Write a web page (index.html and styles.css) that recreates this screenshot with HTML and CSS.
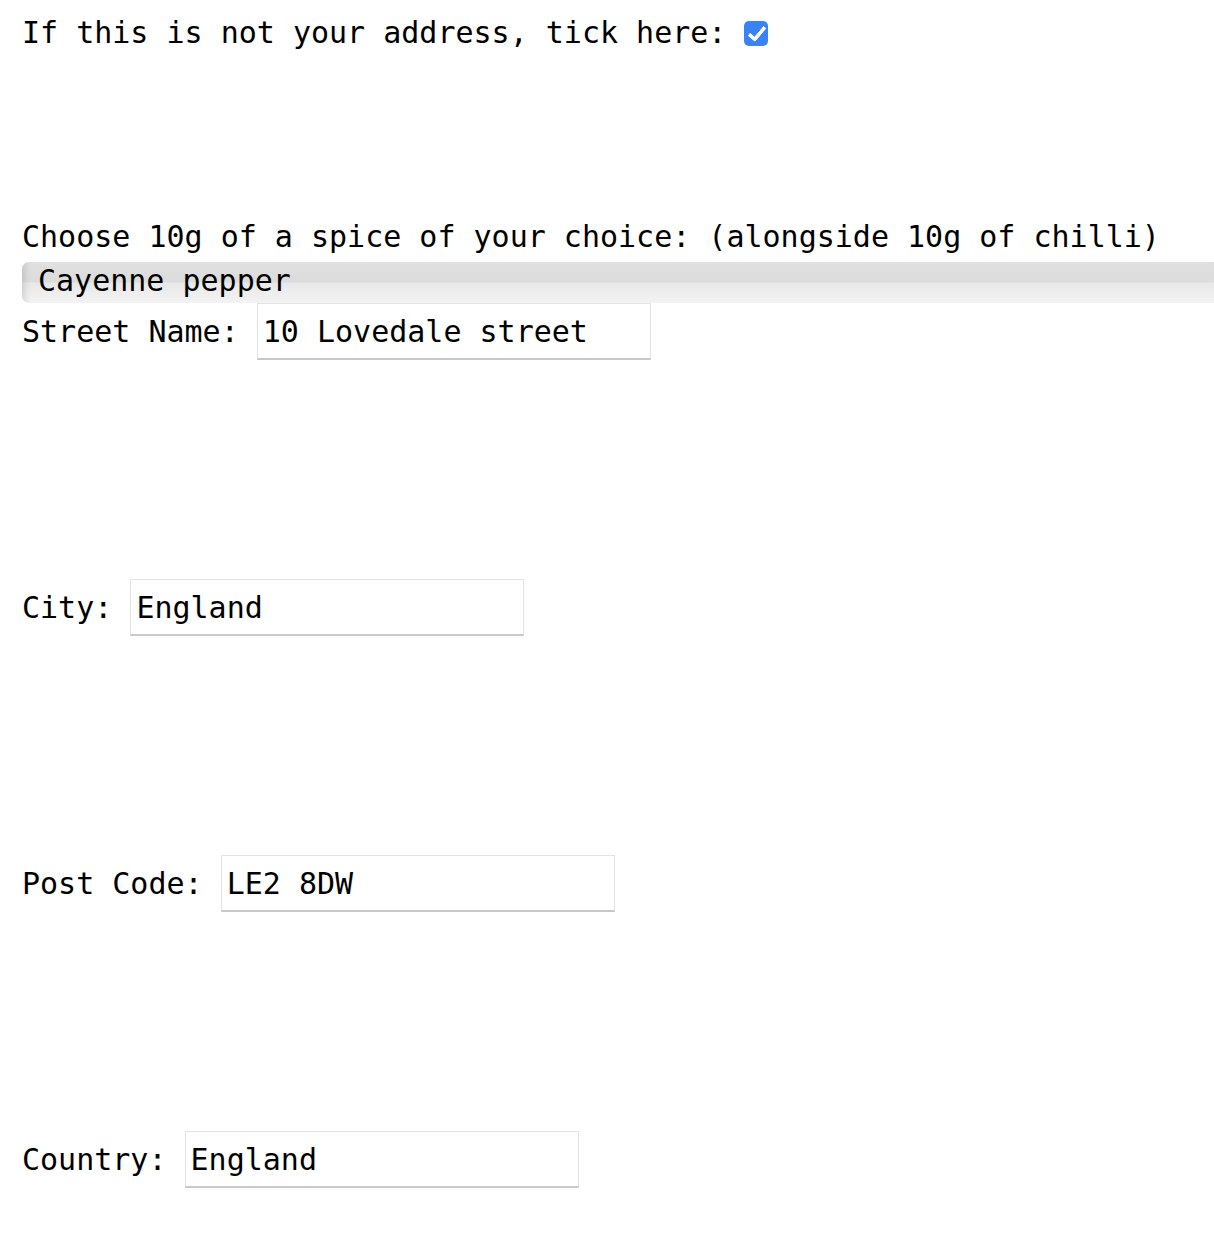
FILE: index.html
```html
<!DOCTYPE html>
<html lang="en">
<head>
<meta charset="utf-8">
<title>Address form</title>
<link rel="stylesheet" href="styles.css">
</head>
<body>
<form class="form">
  <div class="line tick-line">
    <label for="notmine">If this is not your address, tick here:</label>
    <span class="checkbox" id="notmine"><span class="check"></span></span>
  </div>
  <div class="line choose-line">Choose 10g of a spice of your choice: (alongside 10g of chilli)</div>
  <div class="select-wrap">
    <div class="select">Cayenne pepper</div>
  </div>
  <div class="row row-first"><span class="label">Street Name: </span><span class="input">10 Lovedale street</span></div>
  <div class="row"><span class="label">City: </span><span class="input">England</span></div>
  <div class="row"><span class="label">Post Code: </span><span class="input">LE2 8DW</span></div>
  <div class="row"><span class="label">Country: </span><span class="input">England</span></div>
</form>
</body>
</html>
```
FILE: styles.css
```css
html, body {
  margin: 0;
  padding: 0;
  background: #fff;
  overflow-x: hidden;
}
body {
  font-family: "DejaVu Sans Mono", "Liberation Mono", monospace;
  font-size: 30px;
  color: #000;
}
.form {
  padding: 15px 0 0 22px;
}
.line {
  line-height: 35px;
  height: 35px;
  white-space: pre;
}
.tick-line {
  display: flex;
  align-items: center;
}
.checkbox {
  position: relative;
  display: inline-block;
  width: 24px;
  height: 25px;
  margin-left: 18px;
  margin-top: 2px;
  background: #3a82f7;
  border-radius: 5px;
}
.check {
  position: absolute;
  left: 8px;
  top: 2px;
  width: 6px;
  height: 14px;
  border-right: 4px solid #fff;
  border-bottom: 4px solid #fff;
  border-radius: 2px;
  transform: rotate(40deg);
}
.choose-line {
  margin-top: 169px;
}
.select-wrap {
  margin-top: 8px;
  overflow: hidden;
}
.select {
  box-sizing: border-box;
  width: 1260px;
  height: 41px;
  line-height: 35px;
  padding: 1px 0 5px 16px;
  border-radius: 7px 0 0 7px;
  background:
    linear-gradient(to right, rgba(0,0,0,0.10) 0px, rgba(0,0,0,0.03) 5px, rgba(0,0,0,0) 9px),
    linear-gradient(to bottom, #e0e0e0 0%, #dcdcdc 48%, #e8e8e8 52%, #f3f3f3 100%);
  white-space: pre;
}
.row {
  display: flex;
  align-items: center;
  height: 57px;
  margin-top: 219px;
  white-space: pre;
}
.row-first {
  margin-top: 0;
}
.label {
  line-height: 35px;
}
.input {
  box-sizing: border-box;
  width: 394px;
  height: 57px;
  line-height: 35px;
  padding: 10px 5px 10px 5px;
  border: 1px solid #e3e3e3;
  border-bottom: 2px solid #c9c9c9;
  background: #fff;
  white-space: pre;
}
```
